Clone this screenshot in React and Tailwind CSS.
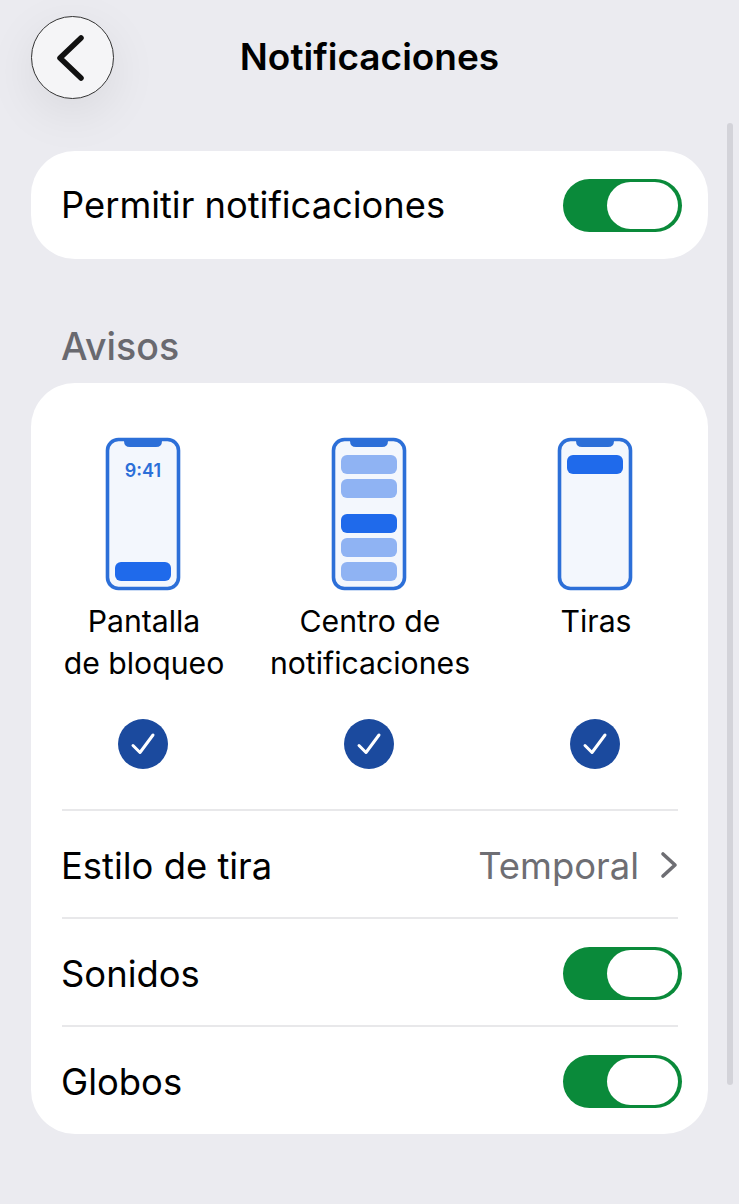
function Toggle() {
    return (
        <div className="flex h-[53px] w-[119px] shrink-0 justify-end rounded-full bg-[#0a8a3a] p-[3px] pr-[4px]">
            <div className="h-[47px] w-[71px] rounded-full bg-white"></div>
        </div>
    )
}

function Row({ label, children }) {
    return (
        <div className="flex h-[108px] items-center justify-between border-t-2 border-[#e8e8ea] pt-[2px]">
            <span className="-ml-[1px] pt-[2px] text-[36.4px] text-black">{label}</span>
            {children}
        </div>
    )
}

function PhoneFrame({ children }) {
    return (
        <svg width="76" height="154" viewBox="0 0 76 154" className="mr-[2px]">
            <rect x="2.5" y="2.5" width="71" height="149" rx="11" fill="#f3f7fd" stroke="#2c6fd8" strokeWidth="3.6" />
            <path d="M19 2 H57 V4 Q57 10 51 10 H25 Q19 10 19 4 Z" fill="#2c6fd8" />
            {children}
        </svg>
    )
}

function Bar({ y, light }) {
    return <rect x="10" y={y} width="56" height="19" rx="6" fill={light ? "#8fb3f3" : "#1f6aeb"} />
}

function Check() {
    return (
        <div className="flex h-[50px] w-[50px] items-center justify-center rounded-full bg-[#1b4a9e]">
            <svg width="26" height="26" viewBox="0 0 26 26" fill="none" stroke="#fff" strokeWidth="3" strokeLinecap="round" strokeLinejoin="round">
                <path d="M3 14.5 L10 21.5 L23 4" />
            </svg>
        </div>
    )
}

function Option({ lines, children }) {
    return (
        <div className="flex w-[226px] shrink-0 flex-col items-center">
            {children}
            <div className="mt-[9px] h-[84px] whitespace-nowrap text-center text-[30.2px] leading-[42px] text-black">
                {lines.map((line) => <div key={line}>{line}</div>)}
            </div>
            <div className="mr-[2px] mt-[35px]"><Check /></div>
        </div>
    )
}

export default function App() {
    return (
        <div className="relative h-[1204px] w-[739px] overflow-hidden bg-[#ebebf0] font-['Inter',sans-serif]">
            {/* scrollbar */}
            <div className="absolute left-[727px] top-[123px] h-[962px] w-[6px] rounded-full bg-[#d3d3d9]"></div>

            <div className="relative flex h-[151px] items-start justify-center">
                <div className="absolute left-[31px] top-[16px] flex h-[83px] w-[83px] items-center justify-center rounded-full border border-[#333] bg-[#f5f5f7] shadow-[0_14px_50px_rgba(0,0,0,0.08)]">
                    <svg width="30" height="48" viewBox="0 0 30 48" fill="none" stroke="#111" strokeWidth="5.5" strokeLinecap="round" strokeLinejoin="round" className="mr-[4px]">
                        <path d="M25 4 L4 24 L25 44" />
                    </svg>
                </div>
                <h1 className="mt-[34px] text-[37px] font-semibold leading-[46px] text-black">Notificaciones</h1>
            </div>

            <div className="mx-[31px] flex h-[108px] items-center justify-between rounded-[44px] bg-white pl-[30px] pr-[26px]">
                <span className="pt-[1px] text-[36.3px] text-black">Permitir notificaciones</span>
                <Toggle />
            </div>

            <div className="ml-[61px] mt-[64px] h-[60px] text-[37.5px] font-medium leading-[48px] text-[#69696f]">Avisos</div>

            <div className="mx-[31px] h-[751px] rounded-[44px] bg-white pl-[31px] pr-[30px]">
                <div className="flex h-[426px] justify-center pt-[54px]">
                    <Option lines={["Pantalla", "de bloqueo"]}>
                        <PhoneFrame>
                            <text x="38" y="40" textAnchor="middle" fontSize="18" fontWeight="600" fill="#2c6fd8" fontFamily="Inter, sans-serif">9:41</text>
                            <Bar y="125" />
                        </PhoneFrame>
                    </Option>
                    <Option lines={["Centro de", "notificaciones"]}>
                        <PhoneFrame>
                            <Bar y="18" light />
                            <Bar y="42" light />
                            <Bar y="77" />
                            <Bar y="101" light />
                            <Bar y="125" light />
                        </PhoneFrame>
                    </Option>
                    <Option lines={["Tiras"]}>
                        <PhoneFrame>
                            <Bar y="18" />
                        </PhoneFrame>
                    </Option>
                </div>
                <Row label="Estilo de tira">
                    <div className="flex items-center gap-[21px] text-[#6e6e73]">
                        <span className="pt-[2px] text-[36.4px]">Temporal</span>
                        <svg width="18" height="28" viewBox="0 0 18 28" fill="none" stroke="#6e6e73" strokeWidth="3.6" strokeLinecap="round" strokeLinejoin="round">
                            <path d="M3 3 L15 14 L3 25" />
                        </svg>
                    </div>
                </Row>
                <Row label="Sonidos"><div className="-mr-[4px]"><Toggle /></div></Row>
                <Row label="Globos"><div className="-mr-[4px]"><Toggle /></div></Row>
            </div>
        </div>
    )
}
